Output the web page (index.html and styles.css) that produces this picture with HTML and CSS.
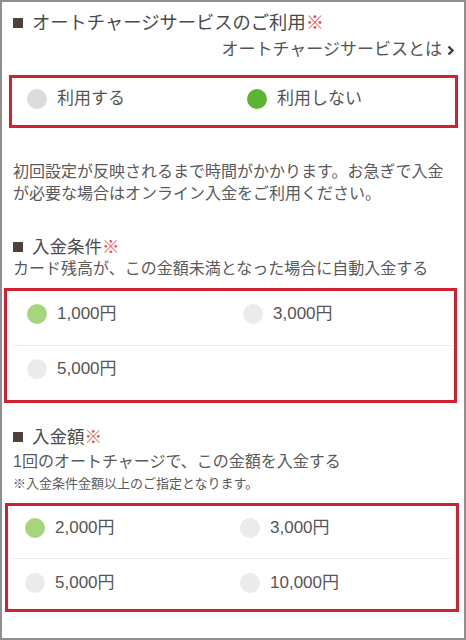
FILE: index.html
```html
<!DOCTYPE html>
<html lang="ja">
<head>
<meta charset="utf-8">
<link rel="stylesheet" href="styles.css">
</head>
<body>
<div class="frame">
  <h2 class="title t1"><span class="sq"></span>オートチャージサービスのご利用<span class="req">※</span></h2>
  <div class="link">オートチャージサービスとは<svg class="chev" width="7" height="11" viewBox="0 0 7 11"><polyline points="1.5,1.5 5.5,5.5 1.5,9.5" fill="none" stroke="#3f3f3f" stroke-width="2.4"/></svg></div>

  <div class="box box1">
    <div class="opts">
      <div class="opt"><span class="dot"></span>利用する</div>
      <div class="opt"><span class="dot on"></span>利用しない</div>
    </div>
  </div>

  <p class="note">初回設定が反映されるまで時間がかかります。お急ぎで入金<br>が必要な場合はオンライン入金をご利用ください。</p>

  <h2 class="title t2"><span class="sq"></span>入金条件<span class="req">※</span></h2>
  <p class="sub">カード残高が、この金額未満となった場合に自動入金する</p>

  <div class="box box2">
    <div class="row r1">
      <div class="opt"><span class="dot sel"></span>1,000円</div>
      <div class="opt"><span class="dot"></span>3,000円</div>
    </div>
    <div class="sep"></div>
    <div class="row r2">
      <div class="opt"><span class="dot"></span>5,000円</div>
    </div>
  </div>

  <h2 class="title t3"><span class="sq"></span>入金額<span class="req">※</span></h2>
  <p class="sub s1">1回のオートチャージで、この金額を入金する</p>
  <p class="small">※入金条件金額以上のご指定となります。</p>

  <div class="box box3">
    <div class="row r1">
      <div class="opt"><span class="dot sel"></span>2,000円</div>
      <div class="opt"><span class="dot"></span>3,000円</div>
    </div>
    <div class="sep"></div>
    <div class="row r2">
      <div class="opt"><span class="dot"></span>5,000円</div>
      <div class="opt"><span class="dot"></span>10,000円</div>
    </div>
  </div>
</div>
</body>
</html>
```

FILE: styles.css
```css
html, body {
  margin: 0;
  padding: 0;
  background: #fff;
}
body {
  font-family: "Liberation Sans", "Noto Sans CJK JP", sans-serif;
  color: #5a5a5a;
}
.frame {
  width: 466px;
  height: 640px;
  box-sizing: border-box;
  border: 2px solid #8f8f8f;
  overflow: hidden;
}
.title {
  margin: 0;
  padding-left: 11px;
  font-weight: normal;
  font-size: 17.5px;
  line-height: 22px;
  color: #4a4a4a;
  display: flex;
  align-items: center;
}
.t1 {
  margin-top: 10px;
  font-size: 18.3px;
}
.sq {
  display: inline-block;
  width: 10px;
  height: 10px;
  background: #4e403b;
  margin-right: 9px;
  flex: none;
}
.req {
  color: #de4f60;
}
.link {
  margin-top: 5px;
  padding-right: 10px;
  font-size: 17px;
  line-height: 22px;
  color: #555;
  display: flex;
  justify-content: flex-end;
  align-items: center;
  gap: 5px;
}
.chev {
  display: block;
}
.box {
  border: 3px solid #d3222f;
}
.box1 {
  margin: 14px 6px 0 7px;
  padding: 11px 0 16px 15px;
}
.opts {
  display: grid;
  grid-template-columns: 220px 1fr;
}
.opt {
  display: flex;
  align-items: center;
  gap: 10px;
  font-size: 17px;
  line-height: 20px;
  color: #555;
}
.dot {
  width: 20px;
  height: 20px;
  border-radius: 50%;
  background: #ebebeb;
  flex: none;
}
.box1 .dot {
  background: #dcdcdc;
}
.box1 .dot.on {
  background: #5bb432;
}
.dot.sel {
  background: #a6d57c;
}
.note {
  margin: 33px 0 0;
  padding: 0 11px;
  font-size: 16px;
  line-height: 22px;
  color: #5a5a5a;
}
.t2 {
  margin-top: 31px;
}
.sub {
  margin: 0;
  padding: 0 11px;
  font-size: 16px;
  line-height: 22px;
  color: #5a5a5a;
}
.s1 {
  margin-top: 3px;
}
.small {
  margin: 2px 0 0;
  padding: 0 11px;
  font-size: 13px;
  line-height: 18px;
  color: #5a5a5a;
}
.row {
  display: grid;
  box-sizing: border-box;
  align-items: start;
}
.sep {
  height: 1px;
  background: #ececec;
}
.box2 {
  margin: 8px 7px 0 2px;
}
.box2 .row {
  height: 54px;
  padding: 13px 0 0 20px;
  grid-template-columns: 216px 1fr;
}
.box2 .sep {
  margin: 0 1px 0 6px;
}
.t3 {
  margin-top: 23px;
}
.box3 {
  margin: 10px 5px 0 3px;
}
.box3 .row {
  padding-left: 17px;
  grid-template-columns: 215px 1fr;
}
.box3 .r1 {
  height: 52px;
  padding-top: 12px;
}
.box3 .r2 {
  height: 50px;
  padding-top: 14px;
}
.box3 .sep {
  margin: 0 3px 0 4px;
}
```
